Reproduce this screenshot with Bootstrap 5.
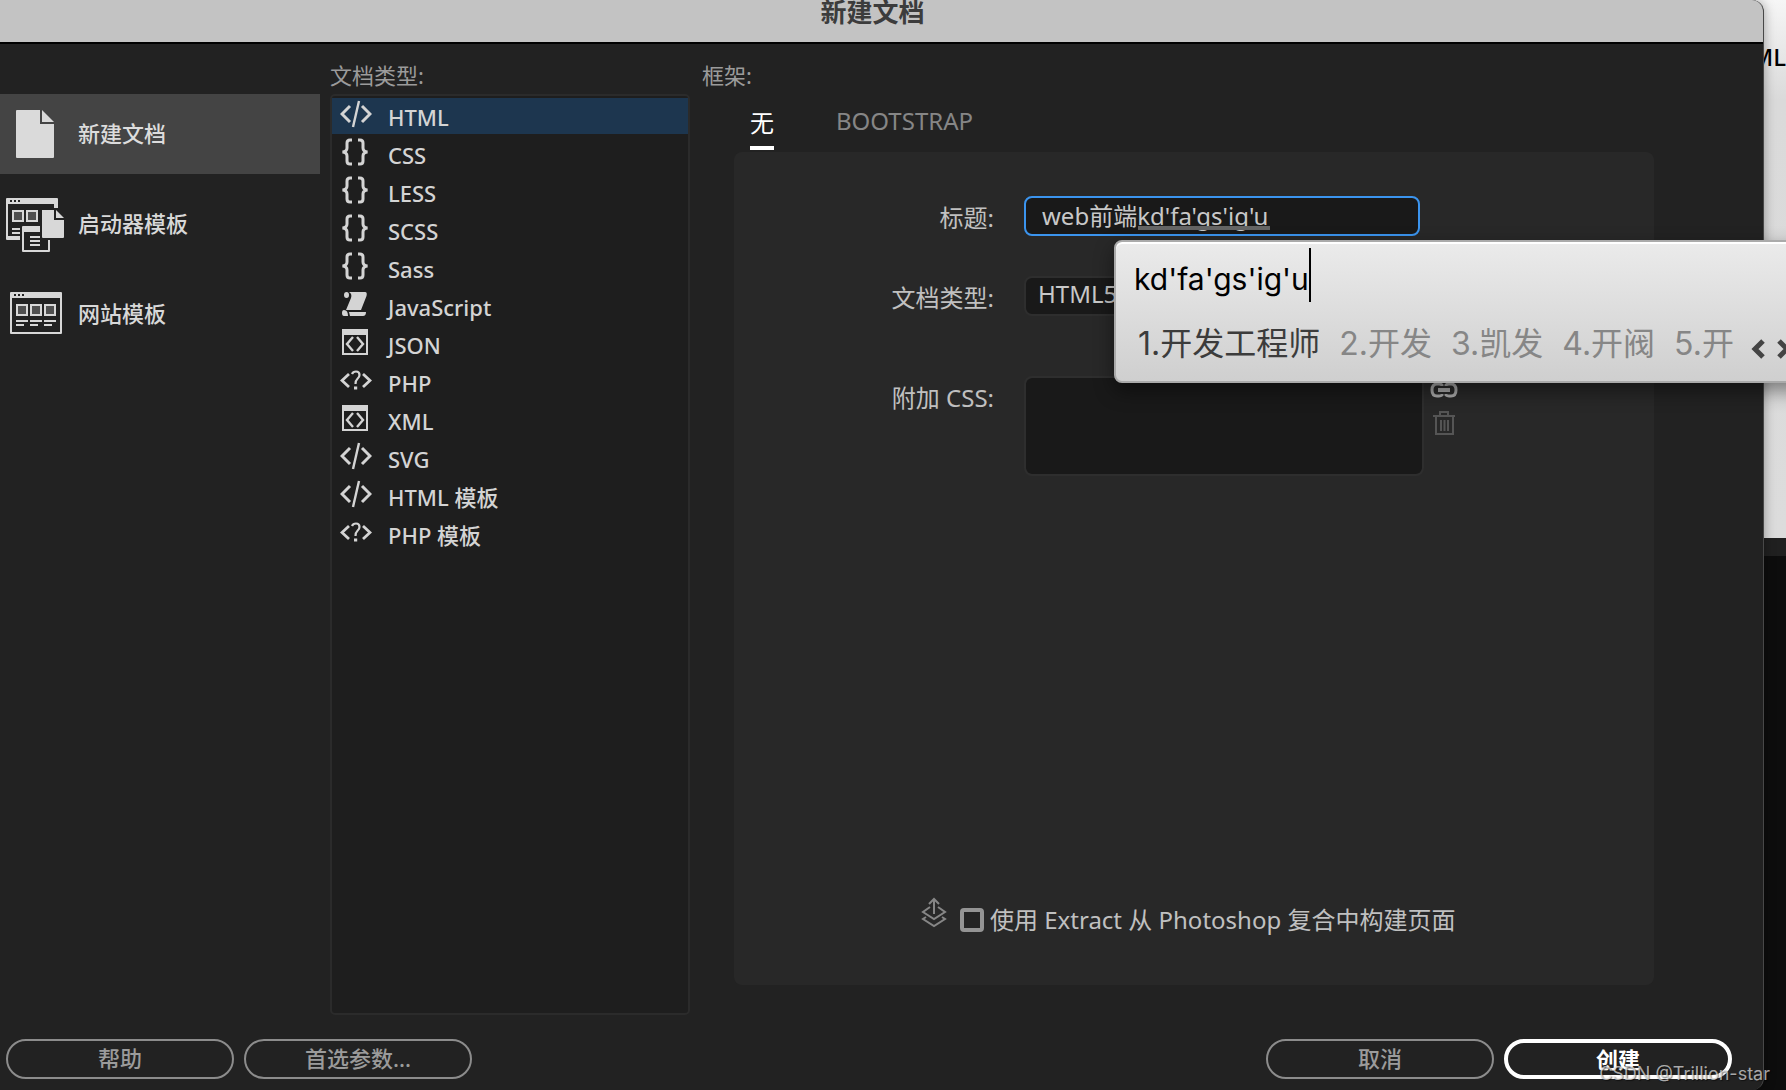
<!DOCTYPE html>
<html lang="zh-CN">
<head>
<meta charset="utf-8">
<meta name="viewport" content="width=device-width, initial-scale=1">
<title>新建文档</title>
<link href="https://cdn.jsdelivr.net/npm/bootstrap@5.3.0/dist/css/bootstrap.min.css" rel="stylesheet">
<script src="https://cdn.jsdelivr.net/npm/bootstrap@5.3.0/dist/js/bootstrap.bundle.min.js"></script>
<style>
  body { font-family: "Noto Sans", "Noto Sans CJK SC", sans-serif; font-size: 22px; line-height: 32px; color: #d2d2d2; background: #0d0d0d; }
  .dialog { background: #222; border-right: 1px solid #484848; border-radius: 0 12px 12px 0; overflow: hidden; box-shadow: 0 0 12px rgba(0,0,0,.35); z-index: 1; }
  .titlebar { height: 44px; padding: 0 18px 18px 0; background: #c3c3c3; border-bottom: 2px solid #000; color: #3c3c3c; font-size: 26px; line-height: 26px; font-weight: 700; }
  .backdrop { width: 22px; margin-left: -12px; padding-left: 12px; box-sizing: content-box; background: #0d0d0d; color: #000; }
  .backdrop-page { height: 538px; margin-left: -12px; padding-top: 41px; background: linear-gradient(#f6f6f6, #dadada 100px, #dcdcdc); direction: rtl; font: 500 24px/32px "Noto Sans", sans-serif; }
  .backdrop-bar { height: 18px; background: #202020; }

  .sidebar { width: 320px; padding-top: 50px; gap: 10px; }
  .sidebar .nav-link { height: 80px; padding: 0; gap: 12px; color: #d8d8d8; font-weight: 500; border-radius: 0; }
  .sidebar .nav-link.active { background: #444; color: #dcdcdc; }
  .sidebar .nav-link span { padding-bottom: 2px; }
  .sidebar svg { width: 66px; height: 60px; flex: none; }

  .types { width: 360px; margin-left: 10px; }
  .caption { height: 50px; padding-top: 15px; color: #9b9b9b; }
  .typelist { background: #1e1e1e; border: 2px solid #2b2b2b; border-radius: 5px; padding-top: 2px; gap: 2px; }
  .typelist .list-group-item { height: 36px; padding: 3px 0 0 8px; gap: 16px; border: 0; border-radius: 0; background: none; color: #d4d4d4; font-weight: 500; line-height: 32px; }
  .typelist .list-group-item.active { background: #1d364f; }
  .typelist svg { width: 32px; height: 28px; margin-top: -1px; flex: none; }

  .frames { margin-left: 12px; padding-right: 109px; }
  .tabs { gap: 62px; padding-left: 48px; height: 58px; }
  .tabs .nav-link { padding: 0; height: 56px; font-size: 24px; line-height: 60px; color: #868686; border-radius: 0; margin-top: -3px; }
  .tabs .nav-link.active { color: #fff; border-bottom: 4px solid #fff; line-height: 64px; height: 59px; }
  .form-panel { margin-left: 32px; margin-bottom: 30px; padding: 44px 0 41px; background: #282828; border-radius: 8px; font-size: 24px; color: #c0c0c0; }
  .form-panel .field-label { width: 260px; line-height: 44px; }
  .form-panel .field-row { gap: 30px; }
  .form-panel .form-control, .form-panel .form-select { width: 400px; height: 40px; padding: 0 14px 4px 12px; font-size: 24px; line-height: 32px; color: #c8c8c8; background-color: #191919; border: 2px solid #2e2e2e; border-radius: 8px; }
  .form-panel .form-control.title-box { width: 396px; padding-left: 16px; border-color: #3b94ee; box-shadow: none; }
  .form-panel textarea.form-control { height: 100px; resize: none; }
  .row-type { padding-top: 36px; }
  .row-css { padding-top: 56px; }
  .composing { left: 114px; top: 30px; width: 132px; height: 4px; background: #656565; }
  .tool { padding: 0; border: 0; line-height: 0; background: none; }
  .tools { margin-left: -24px; padding-top: 6px; gap: 12px; }
  .extract { padding-left: 186px; gap: 12px; }
  .extract svg { margin-bottom: 16px; }
  .extract .form-check-input { width: 24px; height: 24px; margin: 0; background-color: #242424; border: 4px solid #949494; border-radius: 4px; }
  .extract label { margin-left: -6px; line-height: 32px; }

  .footer-bar { padding: 24px 31px 11px 6px; gap: 10px; }
  .pill { width: 228px; height: 40px; padding: 0 0 2px; font-size: 22px; line-height: 32px; font-weight: 500; color: #9b9b9b; border: 2px solid #8c8c8c; border-radius: 20px; }
  .pill-main { color: #fff; font-weight: 700; border: 4px solid #fff; }

  .ime { left: 1114px; right: -30px; top: 240px; height: 143px; padding: 6px 0 0 18px; z-index: 3; background: linear-gradient(#ebebeb, #cfcfcf); border: 2px solid #aaa; border-radius: 8px; box-shadow: inset 0 2px 0 #fff, 0 8px 20px rgba(0,0,0,.45); color: #868686; font: 32px/54px Inter, "Noto Sans CJK SC", sans-serif; }
  .ime-text { color: #000; border-right: 2px solid #000; height: 54px; font-size: 30px; line-height: 62px; }
  .ime-list { gap: 19px; margin-top: 15px; padding-left: 4px; white-space: nowrap; }
  .ime-list .picked { color: #3c3c3c; }
  .ime-list svg { width: 50px; height: 20px; margin: 22px 0 0 -2px; flex: none; }
  .watermark { right: 16px; bottom: 3px; z-index: 4; color: rgba(225,225,225,.72); font: 18px/26px Inter, sans-serif; text-shadow: 1px 1px 1px rgba(0,0,0,.5); }
</style>
</head>
<body>
<svg class="d-none" aria-hidden="true">
  <symbol id="tag" viewBox="0 0 32 28"><path d="M10 6 2 14l8 8M22 6l8 8-8 8" fill="none" stroke="currentColor" stroke-width="3"/><path d="M19 1 13 27" stroke="currentColor" stroke-width="2.4"/></symbol>
  <symbol id="braces" viewBox="0 0 32 28"><path d="M12 2H10Q7 2 7 5v5q0 3.500-4.500 4 4.500.5 4.500 4v5q0 3 3 3h2M18 2h2q3 0 3 3v5q0 3.500 4.500 4-4.500.5-4.500 4v5q0 3-3 3h-2" fill="none" stroke="currentColor" stroke-width="3"/></symbol>
  <symbol id="scroll" viewBox="0 0 32 28"><path d="M9 2h16c2 0 2 2 1.500 4L21 20H6L11 8C12 5 11 3 9 2z" fill="currentColor"/><ellipse cx="6.500" cy="5" rx="2.500" ry="3" fill="currentColor"/><path d="M4 20q4 0 4 6H4q-2 0-2-3t2-3zM9 22h17q0 4-3 4H10z" fill="currentColor"/></symbol>
  <symbol id="codebox" viewBox="0 0 32 28"><path d="M2 1h26v26H2zM4 7v18h22V7z" fill="currentColor" fill-rule="evenodd"/><path d="m13 9-6 7 6 7M17 9l6 7-6 7" fill="none" stroke="currentColor" stroke-width="2.400"/></symbol>
  <symbol id="query" viewBox="0 0 32 28"><path d="M9 8 2 14.500 9 21M23 8l7 6.500L23 21" fill="none" stroke="currentColor" stroke-width="2.800"/><path d="M12 8q1-2.500 4-2.500 3.500 0 3.500 3.500 0 2-2 3.800T15.500 18" fill="none" stroke="currentColor" stroke-width="2.200"/><rect x="14" y="20.500" width="3.200" height="3" fill="currentColor"/></symbol>
</svg>

<div class="d-flex min-vh-100 position-relative overflow-hidden">
  <div class="dialog d-flex flex-column flex-grow-1">
    <header class="titlebar d-flex justify-content-center align-items-center"><span>新建文档</span></header>
    <main class="d-flex flex-grow-1">
      <nav class="sidebar nav flex-column" aria-label="类别">
        <a class="nav-link active d-flex align-items-center" href="#"><svg viewBox="0 0 66 60"><path d="M17 6h23v14h14v33q0 1-1 1H17q-1 0-1-1V7q0-1 1-1z" fill="#dadada"/><path d="M42 6v12h12z" fill="#dadada"/></svg><span>新建文档</span></a>
        <a class="nav-link d-flex align-items-center" href="#"><svg viewBox="0 0 66 60"><path d="M7 4h50q1 0 1 1v9h-4v-4H8v32h12v4H7q-1 0-1-1V5q0-1 1-1z" fill="#d8d8d8"/><path d="M10 6h2v2h-2zM14 6h2v2h-2zM18 6h2v2h-2z" fill="#222"/><path d="M13 17h10v10H13zM27 17h10v10H27z" fill="#505050" stroke="#d8d8d8" stroke-width="2"/><path d="M12 35h8M12 39h8" stroke="#d8d8d8" stroke-width="2"/><path d="M22 33q0-1 1-1h17v6H24v18h24V46h2v11q0 1-1 1H23q-1 0-1-1z" fill="#d8d8d8"/><path d="M30 43h10M30 47h10M30 51h10" stroke="#d8d8d8" stroke-width="2"/><path d="M42 16h12v10h10v17q0 1-1 1H43q-1 0-1-1z" fill="#d8d8d8"/><path d="M56 16v8h8z" fill="#d8d8d8"/></svg><span>启动器模板</span></a>
        <a class="nav-link d-flex align-items-center" href="#"><svg viewBox="0 0 66 60"><path d="M11 8h50q1 0 1 1v40q0 1-1 1H11q-1 0-1-1V9q0-1 1-1zM12 14v34h48V14z" fill="#d8d8d8" fill-rule="evenodd"/><path d="M14 10h2v2h-2zM18 10h2v2h-2zM22 10h2v2h-2z" fill="#222"/><path d="M17 21h10v10H17zM31 21h10v10H31zM45 21h10v10H45z" fill="#505050" stroke="#d8d8d8" stroke-width="2"/><path d="M16 37h12M30 37h12M44 37h12M16 41h8M30 41h8M44 41h8" stroke="#d8d8d8" stroke-width="2"/></svg><span>网站模板</span></a>
      </nav>

      <section class="types d-flex flex-column">
        <div class="caption">文档类型:</div>
        <div class="typelist list-group flex-grow-1">
          <button type="button" class="list-group-item active d-flex"><svg><use href="#tag"/></svg>HTML</button>
          <button type="button" class="list-group-item d-flex"><svg><use href="#braces"/></svg>CSS</button>
          <button type="button" class="list-group-item d-flex"><svg><use href="#braces"/></svg>LESS</button>
          <button type="button" class="list-group-item d-flex"><svg><use href="#braces"/></svg>SCSS</button>
          <button type="button" class="list-group-item d-flex"><svg><use href="#braces"/></svg>Sass</button>
          <button type="button" class="list-group-item d-flex"><svg><use href="#scroll"/></svg>JavaScript</button>
          <button type="button" class="list-group-item d-flex"><svg><use href="#codebox"/></svg>JSON</button>
          <button type="button" class="list-group-item d-flex"><svg><use href="#query"/></svg>PHP</button>
          <button type="button" class="list-group-item d-flex"><svg><use href="#codebox"/></svg>XML</button>
          <button type="button" class="list-group-item d-flex"><svg><use href="#tag"/></svg>SVG</button>
          <button type="button" class="list-group-item d-flex"><svg><use href="#tag"/></svg>HTML 模板</button>
          <button type="button" class="list-group-item d-flex"><svg><use href="#query"/></svg>PHP 模板</button>
        </div>
      </section>

      <section class="frames d-flex flex-column flex-grow-1">
        <div class="caption">框架:</div>
        <nav class="tabs nav" aria-label="框架">
          <a class="nav-link active" href="#">无</a>
          <a class="nav-link" href="#">BOOTSTRAP</a>
        </nav>
        <form class="form-panel d-flex flex-column flex-grow-1">
          <div class="field-row d-flex">
            <label class="field-label text-end" for="doc-title">标题:</label>
            <div class="position-relative">
              <input class="form-control title-box" id="doc-title" type="text" value="web前端kd'fa'gs'ig'u">
              <span class="composing position-absolute"></span>
            </div>
          </div>
          <div class="field-row row-type d-flex">
            <label class="field-label text-end" for="doc-type">文档类型:</label>
            <select class="form-select" id="doc-type"><option>HTML5</option></select>
          </div>
          <div class="field-row row-css d-flex">
            <label class="field-label text-end" for="doc-css">附加 CSS:</label>
            <textarea class="form-control" id="doc-css"></textarea>
            <div class="tools d-flex flex-column">
              <button type="button" class="tool" aria-label="附加样式表"><svg width="28" height="16" viewBox="0 0 28 16" fill="none" stroke="#a8a8a8" stroke-width="3"><path d="M12 4V3q-1-1-3-1H7Q2 2 2 8t5 6h2q2 0 3-1v-1M16 4V3q1-1 3-1h2q5 0 5 6t-5 6h-2q-2 0-3-1v-1"/><path d="M8 8h12" stroke-width="4"/></svg></button>
              <button type="button" class="tool" aria-label="删除"><svg width="24" height="26" viewBox="0 0 24 26" fill="none" stroke="#555" stroke-width="2"><path d="M1 6h22M8 6V2h8v4M4 6v18h17V6M9 10v11M12.500 10v11M16 10v11"/></svg></button>
            </div>
          </div>
          <div class="extract d-flex align-items-center mt-auto">
            <svg width="28" height="32" viewBox="0 0 28 32" fill="none" stroke="#868686" stroke-width="2"><path d="M14 18V3M9 8l5-5 5 5M10 11 3 16l11 7 11-7-7-5M6 21l-3 2 11 7 11-7-3-2"/></svg>
            <input class="form-check-input" type="checkbox" id="use-extract">
            <label for="use-extract">使用 Extract 从 Photoshop 复合中构建页面</label>
          </div>
        </form>
      </section>
    </main>
    <footer class="footer-bar d-flex">
      <button type="button" class="btn pill">帮助</button>
      <button type="button" class="btn pill me-auto">首选参数...</button>
      <button type="button" class="btn pill">取消</button>
      <button type="button" class="btn pill pill-main">创建</button>
    </footer>
  </div>

  <aside class="backdrop flex-shrink-0">
    <div class="backdrop-page overflow-hidden">HTML</div>
    <div class="backdrop-bar"></div>
  </aside>

  <div class="ime position-absolute">
    <div class="d-flex"><span class="ime-text">kd'fa'gs'ig'u</span></div>
    <div class="ime-list d-flex">
      <span class="picked">1.开发工程师</span><span>2.开发</span><span>3.凯发</span><span>4.开阀</span><span>5.开</span>
      <svg viewBox="0 0 50 20" fill="none" stroke="#444" stroke-width="5"><path d="m12 2-8 8 8 8M28 2l8 8-8 8"/></svg>
    </div>
  </div>
  <div class="watermark position-absolute">CSDN @Trillion-star</div>
</div>
</body>
</html>
